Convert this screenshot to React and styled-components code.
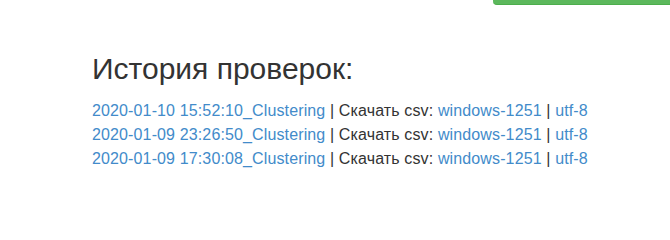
import React from "react";
import styled, { createGlobalStyle } from "styled-components";

const Global = createGlobalStyle`
  html, body { margin: 0; padding: 0; background: #fff; }
  body {
    font-family: "Liberation Sans", Arial, sans-serif;
    color: #333;
    font-size: 16px;
  }
`;

const Page = styled.div`
  width: 670px;
  height: 216px;
  overflow: hidden;
  display: flex;
  flex-direction: column;
`;

const TopBar = styled.div`
  display: flex;
  justify-content: flex-end;
  height: 5px;
`;

const GreenButton = styled.div`
  width: 177px;
  height: 4px;
  background: #5cb85c;
  border-bottom: 1px solid #4cae4c;
  border-bottom-left-radius: 4px;
`;

const Content = styled.div`
  padding: 0 0 0 92px;
`;

const Title = styled.h2`
  margin: 46px 0 0;
  font-size: 30px;
  font-weight: 400;
  line-height: 36px;
  color: #333;
`;

const List = styled.div`
  margin-top: 12px;
  display: flex;
  flex-direction: column;
`;

const Row = styled.div`
  font-size: 16px;
  line-height: 24px;
  letter-spacing: 0.13px;
  color: #333;
  white-space: nowrap;
`;

const Link = styled.a`
  color: #428bca;
  text-decoration: none;
`;

const rows = [
  "2020-01-10 15:52:10_Clustering",
  "2020-01-09 23:26:50_Clustering",
  "2020-01-09 17:30:08_Clustering",
];

export default function App() {
  return (
    <Page>
      <Global />
      <TopBar>
        <GreenButton />
      </TopBar>
      <Content>
        <Title>История проверок:</Title>
        <List>
          {rows.map((r) => (
            <Row key={r}>
              <Link href="#">{r}</Link> | Скачать csv: <Link href="#">windows-1251</Link> | <Link href="#">utf-8</Link>
            </Row>
          ))}
        </List>
      </Content>
    </Page>
  );
}
